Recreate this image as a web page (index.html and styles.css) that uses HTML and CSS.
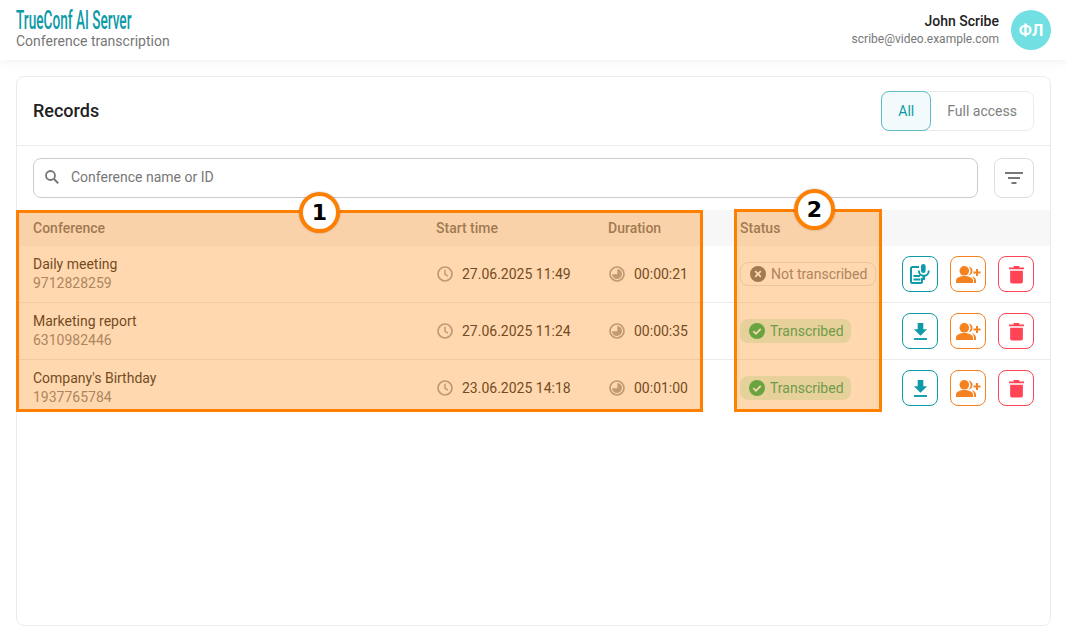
FILE: index.html
```html
<!DOCTYPE html>
<html lang="en">
<head>
<meta charset="utf-8">
<title>TrueConf AI Server</title>
<link rel="stylesheet" href="styles.css">
</head>
<body>
<svg class="defs" aria-hidden="true">
  <defs>
    <symbol id="i-clock" viewBox="0 0 16 16"><circle cx="8" cy="8" r="7" fill="none" stroke="currentColor" stroke-width="1.700"/><path d="M8 3.700v4.600l3 1.900" fill="none" stroke="currentColor" stroke-width="1.500"/></symbol>
    <symbol id="i-dur" viewBox="0 0 16 16"><circle cx="8" cy="8" r="7" fill="none" stroke="currentColor" stroke-width="1.700"/><path d="M8.300 3A5 5 0 1 1 3 8.300H8.300z" fill="currentColor"/></symbol>
    <symbol id="i-x" viewBox="0 0 16 16"><circle cx="8" cy="8" r="8" fill="currentColor"/><path d="M5.200 5.200l5.600 5.600M10.800 5.200l-5.600 5.600" stroke="#fff" stroke-width="1.800"/></symbol>
    <symbol id="i-ok" viewBox="0 0 16 16"><circle cx="8" cy="8" r="8" fill="currentColor"/><path d="M4.300 8.200l2.600 2.600 4.800-5" fill="none" stroke="#fff" stroke-width="1.700"/></symbol>
    <symbol id="i-doc" viewBox="0 0 20 20"><path d="M9 3H2.500a1.500 1.500 0 0 0-1.500 1.500v13A1.500 1.500 0 0 0 2.500 19h8a1.500 1.500 0 0 0 1.500-1.500V14" fill="none" stroke="currentColor" stroke-width="2"/><path d="M3.500 11h6.500v2H3.500zM3.500 14.500h7v2h-7z" fill="currentColor"/><rect x="11" y="0" width="4.600" height="9" rx="2.300" fill="currentColor"/><path d="M8.800 6.500c0 7 10 7 10 0" fill="none" stroke="currentColor" stroke-width="1.900"/><path d="M12.500 12h2.500v4h-2.500z" fill="currentColor"/></symbol>
    <symbol id="i-users" viewBox="0 0 25 17"><circle cx="8.300" cy="4.800" r="4.800" fill="currentColor"/><path d="M0 17v-2.500C0 11.500 4.500 10 8.300 10s8.700 1.500 8.700 4.500V17z" fill="currentColor"/><path d="M12.500.5C15 .9 16.500 2.600 16.500 5s-1.500 4-4 4.500C14 8 14.600 6.600 14.600 5S14 2 12.500.5zM15.500 10.300c2.500.6 4.500 2 4.500 4.200V17h-2v-2.500c0-1.700-1-3.200-2.500-4.200z" fill="currentColor"/><path d="M20 3h2v2.500h2.500v2H22V10h-2V7.500h-2.500v-2H20z" fill="currentColor"/></symbol>
    <symbol id="i-trash" viewBox="0 0 16 20"><path d="M0 2.500h5V1h6v1.500h5V4.500H0z" fill="currentColor"/><path d="M1.200 6h13.600v11.500a2 2 0 0 1-2 2H3.200a2 2 0 0 1-2-2z" fill="currentColor"/></symbol>
    <symbol id="i-down" viewBox="0 0 16 20"><path d="M5 1h6v6.500h4L8 14.500 1 7.500h4z" fill="currentColor"/><path d="M1 17h14v2H1z" fill="currentColor"/></symbol>
  </defs>
</svg>

<header class="topbar">
  <div class="brand">
    <div class="logo">TrueConf AI Server</div>
    <div class="sub">Conference transcription</div>
  </div>
  <div class="user">
    <div class="user-text">
      <div class="user-name">John Scribe</div>
      <div class="user-mail">scribe@video.example.com</div>
    </div>
    <div class="avatar">ФЛ</div>
  </div>
</header>

<main class="card">
  <div class="card-head">
    <h1 class="title">Records</h1>
    <div class="tabs">
      <span class="tab tab-on">All</span>
      <span class="tab">Full access</span>
    </div>
  </div>

  <div class="search-row">
    <div class="search">
      <svg class="search-icon" viewBox="0 0 16 16"><circle cx="6.500" cy="6.500" r="4.500" fill="none" stroke="currentColor" stroke-width="1.800"/><path d="M9.800 9.800l4.400 4.400" stroke="currentColor" stroke-width="2"/></svg>
      <span>Conference name or ID</span>
    </div>
    <div class="filter">
      <svg viewBox="0 0 18 12" class="filter-icon"><path d="M0 0h18v2H0zM3 5h12v2H3zM6.500 10h5v2h-5z" fill="currentColor"/></svg>
    </div>
  </div>

  <div class="table">
    <div class="row row-head">
      <div>Conference</div><div>Start time</div><div>Duration</div><div>Status</div><div></div>
    </div>

    <div class="row">
      <div class="conf"><div class="conf-name">Daily meeting</div><div class="conf-id">9712828259</div></div>
      <div class="cell"><svg class="ico"><use href="#i-clock"/></svg>27.06.2025 11:49</div>
      <div class="cell"><svg class="ico"><use href="#i-dur"/></svg>00:00:21</div>
      <div><span class="badge badge-no"><svg class="badge-ico"><use href="#i-x"/></svg>Not transcribed</span></div>
      <div class="actions">
        <span class="act act-teal"><svg class="a-doc"><use href="#i-doc"/></svg></span>
        <span class="act act-orange"><svg class="a-users"><use href="#i-users"/></svg></span>
        <span class="act act-red"><svg class="a-trash"><use href="#i-trash"/></svg></span>
      </div>
    </div>

    <div class="row">
      <div class="conf"><div class="conf-name">Marketing report</div><div class="conf-id">6310982446</div></div>
      <div class="cell"><svg class="ico"><use href="#i-clock"/></svg>27.06.2025 11:24</div>
      <div class="cell"><svg class="ico"><use href="#i-dur"/></svg>00:00:35</div>
      <div><span class="badge badge-ok"><svg class="badge-ico"><use href="#i-ok"/></svg>Transcribed</span></div>
      <div class="actions">
        <span class="act act-teal"><svg class="a-down"><use href="#i-down"/></svg></span>
        <span class="act act-orange"><svg class="a-users"><use href="#i-users"/></svg></span>
        <span class="act act-red"><svg class="a-trash"><use href="#i-trash"/></svg></span>
      </div>
    </div>

    <div class="row row-last">
      <div class="conf"><div class="conf-name">Company's Birthday</div><div class="conf-id">1937765784</div></div>
      <div class="cell"><svg class="ico"><use href="#i-clock"/></svg>23.06.2025 14:18</div>
      <div class="cell"><svg class="ico"><use href="#i-dur"/></svg>00:01:00</div>
      <div><span class="badge badge-ok"><svg class="badge-ico"><use href="#i-ok"/></svg>Transcribed</span></div>
      <div class="actions">
        <span class="act act-teal"><svg class="a-down"><use href="#i-down"/></svg></span>
        <span class="act act-orange"><svg class="a-users"><use href="#i-users"/></svg></span>
        <span class="act act-red"><svg class="a-trash"><use href="#i-trash"/></svg></span>
      </div>
    </div>
  </div>
</main>

<div class="mark mark-1"><span class="num num-1">1</span></div>
<div class="mark mark-2"><span class="num num-2">2</span></div>
</body>
</html>
```

FILE: styles.css
```css
* { box-sizing: border-box; }
html, body { margin: 0; height: 100%; }
body {
  background: #fff;
  font-family: Roboto, "Liberation Sans", sans-serif;
  font-size: 14px;
  color: #333;
  position: relative;
  overflow: hidden;
}
.defs { position: absolute; width: 0; height: 0; }

.topbar {
  height: 60px;
  display: flex;
  justify-content: space-between;
  align-items: center;
  padding: 0 16px;
  background: #fff;
  box-shadow: 0 2px 10px rgba(0,0,0,.06);
}
.logo {
  font-size: 25px;
  line-height: 24px;
  font-weight: 500;
  color: #0e9aa7;
  transform: scaleX(.545);
  transform-origin: left center;
  white-space: nowrap;
  width: 116px;
}
.sub { font-size: 14px; line-height: 17px; color: #777; }
.brand { margin-top: -2px; }
.user { display: flex; align-items: center; gap: 12px; }
.user-text { text-align: right; }
.user-name { font-size: 14px; line-height: 18px; font-weight: 500; color: #222; }
.user-mail { font-size: 12px; line-height: 18px; color: #777; }
.avatar {
  width: 40px; height: 40px; border-radius: 50%;
  background: #72e0e2; color: #fff;
  font-size: 16px; font-weight: 700;
  display: flex; align-items: center; justify-content: center;
}

.card {
  margin: 16px 16px 0;
  height: 550px;
  border: 1px solid #ebebeb;
  border-radius: 8px;
  background: #fff;
}
.card-head {
  height: 69px;
  display: flex; justify-content: space-between; align-items: center;
  padding: 0 16px;
  border-bottom: 1px solid #ebebeb;
}
.title { margin: -2px 0 0; font-size: 18px; font-weight: 500; color: #222; }
.tabs { display: flex; height: 40px; border: 1px solid #ebebeb; border-radius: 8px; }
.tab { display: flex; align-items: center; padding: 0 16px; color: #808080; font-size: 14px; }
.tab-on {
  margin: -1px 0 -1px -1px;
  width: 50px; justify-content: center; padding: 0;
  background: #f3fafc; border: 1px solid #5fbcc6; border-radius: 8px; color: #0e9aa7;
}

.search-row { display: flex; gap: 16px; padding: 12px 16px; }
.search {
  flex: 1; height: 40px;
  display: flex; align-items: center; gap: 11px;
  padding: 0 10px 2px;
  border: 1px solid #ccc; border-radius: 8px;
  color: #777;
}
.search-icon { width: 16px; height: 16px; color: #777; }
.filter {
  width: 40px; height: 40px; border: 1px solid #ddd; border-radius: 8px;
  display: flex; align-items: center; justify-content: center;
}
.filter-icon { width: 18px; height: 12px; color: #777; }

.row {
  display: grid;
  grid-template-columns: 403px 172px 132px 162px 1fr;
  align-items: center;
  height: 57px;
  padding: 0 16px;
  border-bottom: 1px solid #ebebeb;
}
.row-last { border-bottom: 0; height: 56px; }
.row-head {
  height: 36px; border-bottom: 0;
  background: #f7f7f7;
  color: #777; font-weight: 500; font-size: 14px;
}
.conf-name { font-size: 14px; line-height: 19px; color: #333; }
.conf-id { font-size: 14px; line-height: 19px; color: #888; }
.cell { display: flex; align-items: center; gap: 9px; color: #333; font-size: 14px; }
.ico { width: 16px; height: 16px; margin-left: 1px; color: #a6a6a6; flex: none; }

.badge {
  display: inline-flex; align-items: center; gap: 5px;
  height: 24px; border-radius: 8px; padding: 0 7px 0 9px;
  font-size: 14px; white-space: nowrap;
}
.badge-ico { width: 16px; height: 16px; flex: none; }
.badge-no { color: #888; border: 1px solid #e4e4e4; padding-right: 8px; }
.badge-no .badge-ico { color: #777; }
.badge-ok { background: #dcf5e0; color: #2ba86c; }
.badge-ok .badge-ico { color: #26b45e; }

.actions { display: flex; justify-content: flex-end; gap: 12px; }
.act {
  width: 36px; height: 36px; border-radius: 8px; border: 1px solid;
  display: flex; align-items: center; justify-content: center;
}
.act-teal { border-color: #0e9aa7; color: #0e9aa7; }
.act-orange { border-color: #f58220; color: #f58220; }
.act-red { border-color: #ff4455; color: #ff4455; }
.a-doc { width: 20px; height: 20px; }
.a-users { width: 25px; height: 17px; }
.a-trash { width: 15px; height: 19px; }
.a-down { width: 15px; height: 19px; }

.mark {
  position: absolute;
  border: 3px solid #ff8000;
  background: rgba(255,128,0,.31);
}
.mark-1 { left: 16px; top: 210px; width: 687px; height: 202px; }
.mark-2 { left: 734px; top: 209px; width: 148px; height: 203px; }
.num {
  position: absolute;
  width: 41px; height: 41px; border-radius: 50%;
  background: #fff; border: 4px solid #ff8000;
  color: #000; font-family: "DejaVu Sans", sans-serif; font-weight: 700; font-size: 22px;
  display: flex; align-items: center; justify-content: center;
  box-shadow: 0 0 2px rgba(0,0,0,.3);
}
.num-1 { left: 280px; top: -21px; }
.num-2 { left: 57px; top: -23px; }
```
